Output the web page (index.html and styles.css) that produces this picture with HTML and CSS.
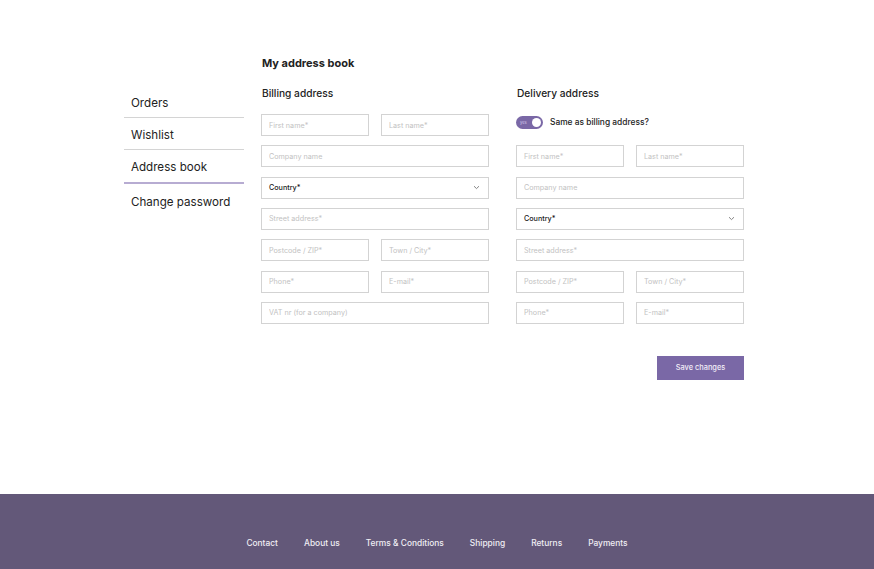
FILE: index.html
```html
<!DOCTYPE html>
<html lang="en">
  <head>
    <meta charset="UTF-8" />
    <meta name="viewport" content="width=device-width, initial-scale=1.0" />
    <title>My address book</title>
    <link rel="stylesheet" href="styles.css">
  </head>

  <body>
    <div class="page">
      <ul class="sidebar">
        <li class="side-item">Orders</li>
        <li class="side-item">Wishlist</li>
        <li class="side-item active">Address book</li>
        <li class="side-item">Change password</li>
      </ul>

      <div class="content">
        <h1 class="title">My address book</h1>

        <div class="columns">
          <!-- billing -->
          <div class="column">
            <h2 class="col-title">Billing address</h2>
            <div class="fields">
              <input class="field" type="text" placeholder="First name*" />
              <input class="field" type="text" placeholder="Last name*" />
              <input class="field wide" type="text" placeholder="Company name" />
              <div class="field wide select">
                <span>Country*</span>
                <svg width="7" height="5" viewBox="0 0 7 5"><path d="M1 1.2 L3.5 3.6 L6 1.2" fill="none" stroke="#777" stroke-width="0.9"/></svg>
              </div>
              <input class="field wide" type="text" placeholder="Street address*" />
              <input class="field" type="text" placeholder="Postcode / ZIP*" />
              <input class="field" type="text" placeholder="Town / City*" />
              <input class="field" type="text" placeholder="Phone*" />
              <input class="field" type="text" placeholder="E-mail*" />
              <input class="field wide" type="text" placeholder="VAT nr (for a company)" />
            </div>
          </div>

          <!-- delivery -->
          <div class="column">
            <h2 class="col-title">Delivery address</h2>
            <div class="fields">
              <div class="same wide">
                <span class="toggle"><span class="toggle-text">yes</span><span class="knob"></span></span>
                <span>Same as billing address?</span>
              </div>
              <input class="field" type="text" placeholder="First name*" />
              <input class="field" type="text" placeholder="Last name*" />
              <input class="field wide" type="text" placeholder="Company name" />
              <div class="field wide select">
                <span>Country*</span>
                <svg width="7" height="5" viewBox="0 0 7 5"><path d="M1 1.2 L3.5 3.6 L6 1.2" fill="none" stroke="#777" stroke-width="0.9"/></svg>
              </div>
              <input class="field wide" type="text" placeholder="Street address*" />
              <input class="field" type="text" placeholder="Postcode / ZIP*" />
              <input class="field" type="text" placeholder="Town / City*" />
              <input class="field" type="text" placeholder="Phone*" />
              <input class="field" type="text" placeholder="E-mail*" />
            </div>
          </div>
        </div>

        <div class="actions">
          <button class="save" type="button">Save changes</button>
        </div>
      </div>
    </div>

    <footer class="footer">
      <a href="#">Contact</a>
      <a href="#">About us</a>
      <a href="#">Terms &amp; Conditions</a>
      <a href="#">Shipping</a>
      <a href="#">Returns</a>
      <a href="#">Payments</a>
    </footer>
  </body>
</html>
```

FILE: styles.css
```css
body {
  margin: 0;
  min-height: 100vh;
  display: flex;
  flex-direction: column;
  font-family: Inter, "Noto Sans", sans-serif;
  color: #222;
  background: #fff;
}

.page {
  flex: 1;
  display: flex;
  padding-left: 124px;
}

.sidebar {
  list-style: none;
  margin: 86px 0 0;
  padding: 0;
  width: 120px;
  flex-shrink: 0;
}
.side-item {
  padding: 9px 7px 6px;
  font-size: 11.6px;
  line-height: 16px;
  white-space: nowrap;
  border-bottom: 1px solid #d4d4d4;
}
.side-item.active {
  border-bottom: 2px solid #b7acd2;
  padding-bottom: 7px;
}
.side-item:last-child {
  border-bottom: none;
  padding-top: 10px;
}

.content {
  margin-left: 17px;
}
.title {
  margin: 56px 0 0 1px;
  font-size: 11px;
  line-height: 14px;
  font-weight: 700;
}

.columns {
  display: flex;
  gap: 27px;
  margin-top: 16px;
}
.column {
  width: 228px;
}
.col-title {
  margin: 0 0 14px 1px;
  font-size: 10.2px;
  line-height: 14px;
  font-weight: 500;
}

.fields {
  display: grid;
  grid-template-columns: 1fr 1fr;
  column-gap: 12px;
  row-gap: 9.33px;
}
.field {
  box-sizing: border-box;
  height: 22px;
  width: 100%;
  margin: 0;
  padding: 0 7px;
  border: 1px solid #d3d3d3;
  border-radius: 0;
  font-family: inherit;
  font-size: 7.2px;
  color: #222;
  background: #fff;
}
.field::placeholder {
  color: #c2c2c2;
}
.wide {
  grid-column: span 2;
}
.select {
  display: flex;
  align-items: center;
  justify-content: space-between;
  padding: 0 8px 0 7px;
  font-weight: 500;
}

.same {
  display: flex;
  align-items: center;
  gap: 7px;
  box-sizing: border-box;
  height: 22px;
  padding-bottom: 6px;
  font-size: 8.4px;
  font-weight: 500;
}
.toggle {
  display: flex;
  align-items: center;
  justify-content: space-between;
  box-sizing: border-box;
  width: 27px;
  height: 13px;
  padding: 0 2px 0 4px;
  border-radius: 7px;
  background: #7a68a6;
}
.toggle-text {
  font-size: 4px;
  color: #c9bfe2;
}
.knob {
  width: 9px;
  height: 9px;
  border-radius: 50%;
  background: #fff;
}

.actions {
  display: flex;
  justify-content: flex-end;
  margin-top: 32px;
}
.save {
  width: 87px;
  height: 24px;
  border: none;
  background: #7a68a6;
  color: #f2eef8;
  font-family: inherit;
  font-size: 7.4px;
  font-weight: 500;
}

.footer {
  height: 75px;
  box-sizing: border-box;
  padding-top: 43px;
  display: flex;
  justify-content: center;
  gap: 26px;
  background: #635879;
}
.footer a {
  color: #f0eef4;
  text-decoration: none;
  font-size: 8.4px;
  line-height: 12px;
  font-weight: 500;
}
```
